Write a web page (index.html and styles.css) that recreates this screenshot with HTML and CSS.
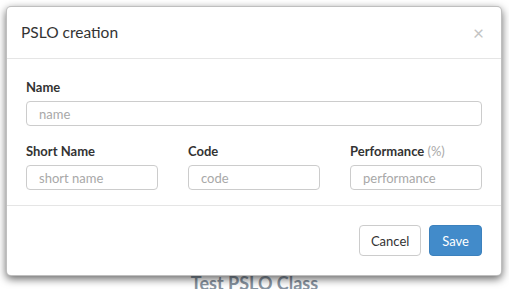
FILE: index.html
```html
<html><head>
<link rel="stylesheet" href="styles.css">
</head>
<body>
  <div class="page">
    <h2 class="page-title">Test PSLO Class</h2>
  </div>

  <div class="modal">
    <div class="modal-header">
      <h4 class="modal-title">PSLO creation</h4>
      <span class="close">&times;</span>
    </div>
    <div class="modal-body">
      <div class="form-group">
        <label>Name</label>
        <input class="form-control" type="text" placeholder="name">
      </div>
      <div class="form-row">
        <div class="form-group">
          <label>Short Name</label>
          <input class="form-control" type="text" placeholder="short name">
        </div>
        <div class="form-group">
          <label>Code</label>
          <input class="form-control" type="text" placeholder="code">
        </div>
        <div class="form-group">
          <label>Performance <span class="muted">(%)</span></label>
          <input class="form-control" type="text" placeholder="performance">
        </div>
      </div>
    </div>
    <div class="modal-footer">
      <button class="btn btn-default">Cancel</button>
      <button class="btn btn-primary">Save</button>
    </div>
  </div>
</body></html>
```

FILE: styles.css
```css
body {
  margin: 0;
  background: #fff;
  font-family: 'Lato', 'Segoe UI', sans-serif;
  font-size: 13px;
  color: #333;
  width: 509px;
  height: 289px;
  overflow: hidden;
  position: relative;
}

.page {
  padding-top: 272px;
  text-align: center;
}

.page-title {
  margin: 0;
  font-size: 18px;
  font-weight: bold;
  color: #8793a0;
}

.modal {
  position: absolute;
  left: 6px;
  top: 6px;
  width: 494px;
  background: #fff;
  border: 1px solid rgba(0,0,0,0.25);
  border-radius: 5px;
  box-shadow: 0 3px 9px rgba(0,0,0,0.6);
}

.modal-header {
  display: flex;
  align-items: center;
  justify-content: space-between;
  padding: 15px 17px 15px 14px;
  border-bottom: 1px solid #e5e5e5;
}

.modal-title {
  margin: 0;
  font-size: 15.5px;
  font-weight: normal;
  line-height: 21px;
  color: #333;
}

.close {
  font-size: 19px;
  line-height: 21px;
  color: #c4c4c4;
}

.modal-body {
  padding: 19px 19px 15px 19px;
}

.form-group {
  margin-bottom: 16px;
}

.form-row .form-group {
  margin-bottom: 0;
}

.form-row {
  display: grid;
  grid-template-columns: 1fr 1fr 1fr;
  gap: 30px;
}

label {
  display: block;
  font-weight: bold;
  line-height: 18px;
  margin-bottom: 5px;
}

.muted {
  color: #aaa;
  font-weight: normal;
}

.form-control {
  display: block;
  box-sizing: border-box;
  width: 100%;
  height: 25px;
  padding: 0 12px;
  border: 1px solid #ccc;
  border-radius: 4px;
  font-family: inherit;
  font-size: 13px;
  color: #555;
}

.form-control::placeholder {
  color: #a8a8a8;
}

.modal-footer {
  display: flex;
  justify-content: flex-end;
  gap: 8px;
  padding: 19px 19px;
  border-top: 1px solid #e5e5e5;
}

.btn {
  height: 31px;
  padding: 0 11px;
  border: 1px solid #ccc;
  border-radius: 4px;
  font-family: inherit;
  font-size: 13px;
  background: #fff;
  color: #333;
}

.btn-primary {
  background: #428bca;
  border-color: #3c81bd;
  color: #fff;
  padding: 0 12px;
}
```
